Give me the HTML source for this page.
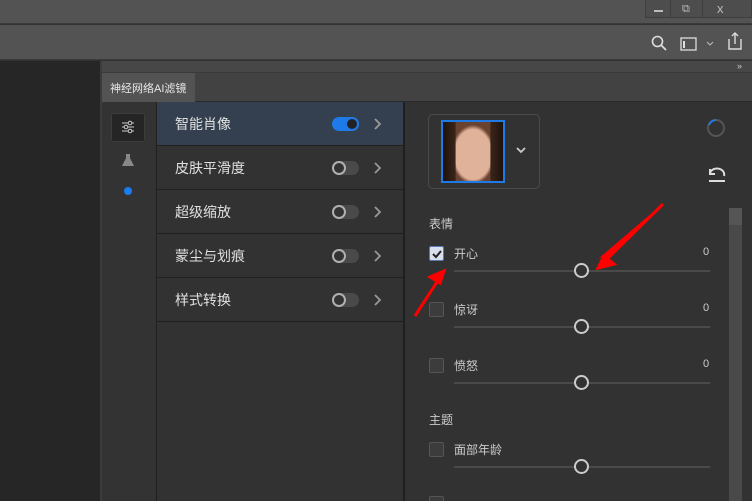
<!DOCTYPE html><html><head><meta charset="utf-8"><style>
*{margin:0;padding:0;box-sizing:border-box}
html,body{width:752px;height:501px;overflow:hidden}
body{background:#323232;position:relative;font-family:"Liberation Sans","Noto Sans CJK SC",sans-serif;color:#ddd}
.a{position:absolute}
.row{position:absolute;left:157px;width:246px;height:44px;border-bottom:1px solid #1f1f1f;background:#323232}
.row span{position:absolute;left:18px;top:12px;font-size:14px;color:#e0e0e0}
.tg{position:absolute;left:175px;top:15px;width:27px;height:14px;border-radius:7px;background:#4a4a4a}
.tg i{position:absolute;left:0;top:0;width:14px;height:14px;border-radius:50%;border:2px solid #b0b0b0;background:#333}
.ch{position:absolute;left:216px;top:16px}
.cb{position:absolute;width:15px;height:15px;border:1px solid #555;background:#3c3c3c;border-radius:2px;left:429px}
.lbl{position:absolute;left:454px;font-size:12px;color:#ccc}
.val{position:absolute;left:703px;font-size:11px;color:#ccc}
.tr{position:absolute;left:454px;width:256px;height:2px;background:#4a4a4a}
.kn{position:absolute;left:574px;width:15px;height:15px;border-radius:50%;border:2px solid #ccc;background:#323232}
</style></head><body>
<div class="a" style="left:0;top:0;width:752px;height:24px;background:#535353;border-bottom:1px solid #3a3a3a"></div>
<div class="a" style="left:645px;top:0;width:107px;height:18px;background:#4d4d4d;border:1px solid #3e3e3e;border-top:0"></div>
<div class="a" style="left:654px;top:10px;width:9px;height:2px;background:#bbb"></div>
<div class="a" style="left:670px;top:0;width:1px;height:18px;background:#3e3e3e"></div>
<div class="a" style="left:682px;top:3px;color:#bbb;font-size:11px">⧉</div>
<div class="a" style="left:702px;top:0;width:1px;height:18px;background:#3e3e3e"></div>
<div class="a" style="left:717px;top:1px;color:#bbb;font-size:13px">x</div>
<div class="a" style="left:0;top:25px;width:752px;height:35px;background:#535353;border-bottom:1px solid #3a3a3a"></div>
<svg class="a" style="left:651px;top:35px" width="16" height="16"><circle cx="6.5" cy="6.5" r="5" fill="none" stroke="#ddd" stroke-width="1.6"/><path d="M10 10l5 5" stroke="#ddd" stroke-width="1.8"/></svg>
<svg class="a" style="left:680px;top:36px" width="38" height="16"><rect x="1" y="2" width="15" height="12" fill="none" stroke="#ddd" stroke-width="1.3"/><rect x="3" y="5" width="2" height="7" fill="#ddd"/><path d="M27 6l3 3 3-3" fill="none" stroke="#bbb" stroke-width="1"/></svg>
<svg class="a" style="left:726px;top:31px" width="18" height="20"><path d="M3 8v10h12V8M9 13V2M6 5l3-3 3 3" fill="none" stroke="#ddd" stroke-width="1.4"/></svg>
<div class="a" style="left:0;top:61px;width:100px;height:440px;background:#262626"></div>
<div class="a" style="left:100px;top:61px;width:2px;height:440px;background:#3c3c3c"></div>
<div class="a" style="left:102px;top:61px;width:650px;height:12px;background:#474747;border-bottom:1px solid #3a3a3a"></div>
<div class="a" style="left:737px;top:61px;font-size:9px;color:#ccc">»</div>
<div class="a" style="left:102px;top:73px;width:650px;height:29px;background:#424242;border-bottom:1px solid #2a2a2a"></div>
<div class="a" style="left:102px;top:73px;width:93px;height:29px;background:#535353;font-size:11px;color:#e8e8e8;padding:7px 0 0 8px">神经网络AI滤镜</div>
<div class="a" style="left:102px;top:102px;width:55px;height:399px;background:#333"></div>
<div class="a" style="left:111px;top:113px;width:34px;height:29px;background:#252525;border:1px solid #3c3c3c;border-radius:3px"></div>
<svg class="a" style="left:120px;top:119px" width="16" height="16"><path d="M2 4h12M2 8h12M2 12h12" stroke="#ccc" stroke-width="1"/><circle cx="10" cy="4" r="1.8" fill="#252525" stroke="#ccc"/><circle cx="6" cy="8" r="1.8" fill="#252525" stroke="#ccc"/><circle cx="10" cy="12" r="1.8" fill="#252525" stroke="#ccc"/></svg>
<svg class="a" style="left:121px;top:152px" width="14" height="16"><path d="M5 2h4v4l4 8H1l4-8z" fill="#888"/></svg>
<div class="a" style="left:124px;top:187px;width:8px;height:8px;border-radius:50%;background:#1a7cf0"></div>
<div class="a" style="left:156px;top:102px;width:1px;height:399px;background:#1f1f1f"></div>
<div class="a" style="left:403px;top:102px;width:2px;height:399px;background:#1f1f1f"></div>
<div class="row" style="top:102px;background:#34404f"><span>智能肖像</span><div class="tg" style="background:#1e7ae6"><i style="left:13px;border-color:#1e7ae6;background:#222"></i></div><svg class="ch" width="8" height="12"><path d="M2 1l5 5-5 5" fill="none" stroke="#999" stroke-width="1.8"/></svg></div>
<div class="row" style="top:146px"><span>皮肤平滑度</span><div class="tg"><i></i></div><svg class="ch" width="8" height="12"><path d="M2 1l5 5-5 5" fill="none" stroke="#999" stroke-width="1.8"/></svg></div>
<div class="row" style="top:190px"><span>超级缩放</span><div class="tg"><i></i></div><svg class="ch" width="8" height="12"><path d="M2 1l5 5-5 5" fill="none" stroke="#999" stroke-width="1.8"/></svg></div>
<div class="row" style="top:234px"><span>蒙尘与划痕</span><div class="tg"><i></i></div><svg class="ch" width="8" height="12"><path d="M2 1l5 5-5 5" fill="none" stroke="#999" stroke-width="1.8"/></svg></div>
<div class="row" style="top:278px"><span>样式转换</span><div class="tg"><i></i></div><svg class="ch" width="8" height="12"><path d="M2 1l5 5-5 5" fill="none" stroke="#999" stroke-width="1.8"/></svg></div>
<div class="a" style="left:428px;top:114px;width:112px;height:75px;border:1px solid #4a4a4a;border-radius:5px"></div>
<div class="a" style="left:441px;top:120px;width:64px;height:63px;border:2px solid #1e7ae6;background:linear-gradient(90deg,#1e120c,#3a2419 20%,transparent 22%,transparent 78%,#3a2419 80%,#1e120c),radial-gradient(ellipse 36% 50% at 50% 55%,#e0b29a 0 85%,#6a4230 100%),#2a1a12"></div>
<svg class="a" style="left:515px;top:146px" width="12" height="9"><path d="M2 2l4 4 4-4" fill="none" stroke="#ccc" stroke-width="1.8"/></svg>
<svg class="a" style="left:706px;top:118px" width="20" height="20"><circle cx="10" cy="10" r="8" fill="none" stroke="#555" stroke-width="2"/><path d="M3 7A8 8 0 0 1 10 2" fill="none" stroke="#1e7ae6" stroke-width="2"/></svg>
<svg class="a" style="left:707px;top:167px" width="20" height="16"><path d="M3 6a6 5 0 0 1 14 3M3 2v5h5" fill="none" stroke="#ddd" stroke-width="2"/><path d="M2 14h16" stroke="#ddd" stroke-width="2"/></svg>
<div class="a" style="left:729px;top:208px;width:13px;height:293px;background:#494949"></div>
<div class="a" style="left:729px;top:208px;width:13px;height:17px;background:#555"></div>
<div class="a" style="left:429px;top:215px;font-size:12px;color:#ccc">表情</div>
<div class="cb" style="top:246px;background:#d8dfee;border-color:#5a7ab0"></div>
<svg class="a" style="left:431px;top:248px" width="12" height="12"><path d="M2 6l3 3 5-6" fill="none" stroke="#222" stroke-width="2"/></svg>
<div class="lbl" style="top:245px">开心</div><div class="val" style="top:246px">0</div>
<div class="tr" style="top:270px"></div><div class="kn" style="top:263px"></div>
<div class="cb" style="top:302px"></div><div class="lbl" style="top:301px">惊讶</div><div class="val" style="top:302px">0</div>
<div class="tr" style="top:326px"></div><div class="kn" style="top:319px"></div>
<div class="cb" style="top:358px"></div><div class="lbl" style="top:357px">愤怒</div><div class="val" style="top:358px">0</div>
<div class="tr" style="top:382px"></div><div class="kn" style="top:375px"></div>
<div class="a" style="left:429px;top:411px;font-size:12px;color:#ccc">主题</div>
<div class="cb" style="top:442px"></div><div class="lbl" style="top:441px">面部年龄</div>
<div class="tr" style="top:466px"></div><div class="kn" style="top:459px"></div>
<div class="cb" style="top:496px"></div>
<svg class="a" style="left:0;top:0" width="752" height="501"><path d="M660 206L603 263l3-8-8 4z" fill="#f00"/><path d="M663 204L598 268M598 268l16-4-10-8z" stroke="#f00" stroke-width="3" fill="#f00"/><path d="M415 316l29-45M444 271l-14 6 10 6z" stroke="#f00" stroke-width="3" fill="#f00"/></svg>
</body></html>
